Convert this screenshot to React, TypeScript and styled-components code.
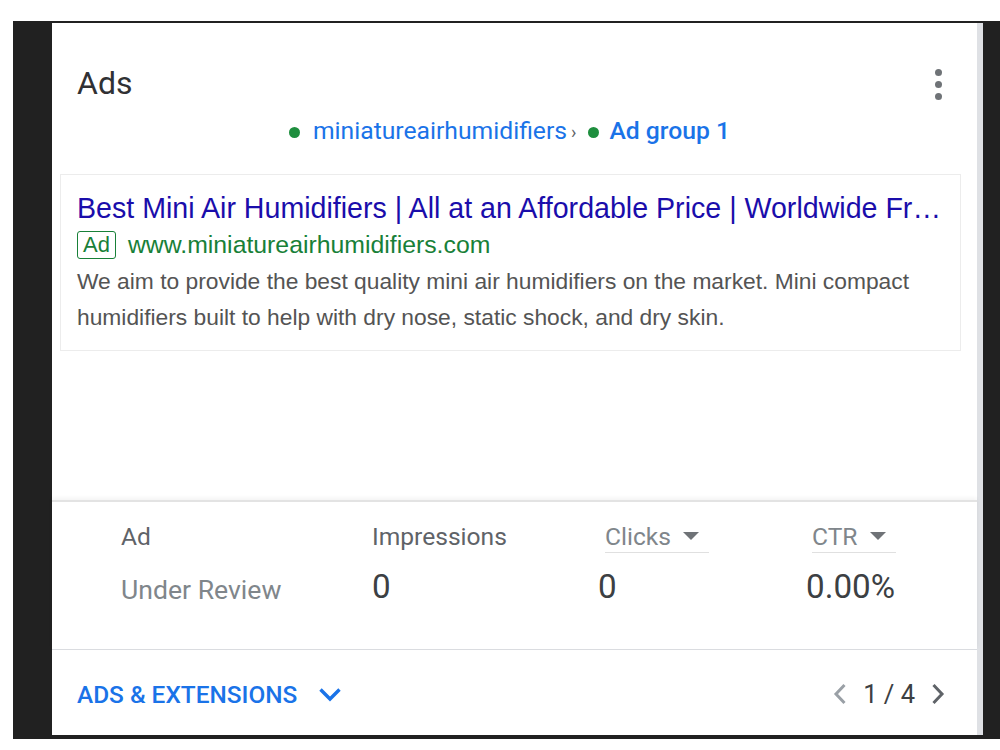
import React from 'react';
import styled, { createGlobalStyle } from 'styled-components';

const GlobalStyle = createGlobalStyle`
  html, body {
    margin: 0;
    padding: 0;
    background: #ffffff;
  }
  body {
    font-family: Roboto, 'Liberation Sans', Arial, sans-serif;
  }
`;

interface StatColumn {
  label: string;
  value: string;
  sortable?: boolean;
  offset?: number;
  tone?: 'muted' | 'normal';
}

const columns: StatColumn[] = [
  { label: 'Ad', value: 'Under Review', tone: 'muted' },
  { label: 'Impressions', value: '0' },
  { label: 'Clicks', value: '0', sortable: true, offset: 7 },
  { label: 'CTR', value: '0.00%', sortable: true, offset: 6 },
];

const App: React.FC = () => {
  return (
    <>
      <GlobalStyle />
      <Frame>
        <Card>
          <TopSection>
            <Header>
              <Title>Ads</Title>
              <MenuDots aria-label="More">
                <Dot />
                <Dot />
                <Dot />
              </MenuDots>
            </Header>

            <Breadcrumb>
              <StatusDot />
              <CrumbLink>miniatureairhumidifiers</CrumbLink>
              <CrumbSep>›</CrumbSep>
              <StatusDot $tight />
              <CrumbLink $strong>Ad group 1</CrumbLink>
            </Breadcrumb>

            <Preview>
              <AdTitle>
                Best Mini Air Humidifiers | All at an Affordable Price | Worldwide Fr…
              </AdTitle>
              <UrlRow>
                <AdBadge>Ad</AdBadge>
                <AdUrl>www.miniatureairhumidifiers.com</AdUrl>
              </UrlRow>
              <AdDescription>
                We aim to provide the best quality mini air humidifiers on the market. Mini compact
                humidifiers built to help with dry nose, static shock, and dry skin.
              </AdDescription>
            </Preview>
          </TopSection>

          <Stats>
            {columns.map((col) => (
              <LabelCell key={col.label}>
                <StatLabel $sortable={!!col.sortable} $offset={col.offset ?? 0}>
                  {col.label}
                  {col.sortable && <SortArrow />}
                </StatLabel>
              </LabelCell>
            ))}
            {columns.map((col) => (
              <StatValue key={col.label + '-v'} $muted={col.tone === 'muted'}>
                {col.value}
              </StatValue>
            ))}
          </Stats>

          <Footer>
            <ExpandButton>
              ADS &amp; EXTENSIONS
              <svg width="24" height="15" viewBox="0 0 24 15">
                <polyline
                  points="2.5,2.5 12,12 21.5,2.5"
                  fill="none"
                  stroke="#1a73e8"
                  strokeWidth="3.4"
                />
              </svg>
            </ExpandButton>
            <Pager>
              <svg width="14" height="22" viewBox="0 0 14 22">
                <polyline points="11.5,2 3,11 11.5,20" fill="none" stroke="#9aa0a6" strokeWidth="3" />
              </svg>
              <PageText>1 / 4</PageText>
              <svg width="14" height="22" viewBox="0 0 14 22">
                <polyline points="2.5,2 11,11 2.5,20" fill="none" stroke="#5f6368" strokeWidth="3" />
              </svg>
            </Pager>
          </Footer>
        </Card>
      </Frame>
    </>
  );
};

const Frame = styled.div`
  margin: 21px 0 0 13px;
  width: 987px;
  height: 718px;
  box-sizing: border-box;
  padding: 2px 17px 4px 39px;
  background: #212121;
  display: flex;
`;

const Card = styled.div`
  flex: 1;
  background: #ffffff;
  border-right: 6px solid #dfe1e5;
  display: flex;
  flex-direction: column;
  min-width: 0;
`;

const TopSection = styled.div`
  flex: 1;
  display: flex;
  flex-direction: column;
`;

const Header = styled.div`
  display: flex;
  align-items: center;
  justify-content: space-between;
  padding: 40px 35px 0 25px;
`;

const Title = styled.h1`
  margin: 0;
  font-family: Roboto, sans-serif;
  font-weight: 400;
  font-size: 32px;
  line-height: 40px;
  color: #303134;
`;

const MenuDots = styled.div`
  display: flex;
  flex-direction: column;
  gap: 5px;
  margin-top: 3px;
`;

const Dot = styled.span`
  width: 7px;
  height: 7px;
  border-radius: 50%;
  background: #6f7377;
`;

const Breadcrumb = styled.div`
  margin-top: 13px;
  padding-right: 10px;
  display: flex;
  justify-content: center;
  align-items: center;
  height: 30px;
  font-family: Roboto, sans-serif;
  font-size: 24.7px;
  color: #1a73e8;
`;

const StatusDot = styled.span<{ $tight?: boolean }>`
  width: 11px;
  height: 11px;
  border-radius: 50%;
  background: #1e8e3e;
  margin-right: ${({ $tight }) => ($tight ? 10 : 13)}px;
  margin-top: 2px;
`;

const CrumbLink = styled.span<{ $strong?: boolean }>`
  font-weight: ${({ $strong }) => ($strong ? 500 : 400)};
  line-height: 30px;
`;

const CrumbSep = styled.span`
  margin: 0 12px 0 4px;
  font-size: 18px;
  color: #5f6368;
`;

const Preview = styled.div`
  margin: 28px 16px 0 8px;
  border: 1px solid #ececec;
  padding: 15px 17px 15px 16px;
  font-family: 'Liberation Sans', Arial, sans-serif;
`;

const AdTitle = styled.div`
  font-size: 28.6px;
  line-height: 36px;
  color: #1a0dab;
  white-space: nowrap;
  overflow: hidden;
  text-overflow: ellipsis;
`;

const UrlRow = styled.div`
  display: flex;
  align-items: center;
  gap: 12px;
  height: 30px;
  margin-top: 4px;
`;

const AdBadge = styled.span`
  box-sizing: border-box;
  height: 28px;
  padding: 0 5px;
  border: 1px solid #188038;
  border-radius: 3px;
  font-size: 22px;
  line-height: 26px;
  color: #188038;
`;

const AdUrl = styled.span`
  font-size: 24.8px;
  line-height: 30px;
  color: #188038;
`;

const AdDescription = styled.p`
  margin: 3px 0 0;
  font-size: 22.8px;
  line-height: 36px;
  color: #545454;
`;

const Stats = styled.div`
  height: 149px;
  box-sizing: border-box;
  border-top: 2px solid #e3e3e3;
  box-shadow: 0 -2px 4px rgba(0, 0, 0, 0.05);
  padding: 18px 0 0 69px;
  display: grid;
  grid-template-columns: 251px 226px 208px auto;
  grid-template-rows: 33px 40px;
  row-gap: 14px;
  align-content: start;
  font-family: Roboto, sans-serif;
`;

const LabelCell = styled.div`
  display: flex;
  align-items: flex-start;
`;

const StatLabel = styled.div<{ $sortable: boolean; $offset: number }>`
  display: inline-flex;
  align-items: center;
  gap: 12px;
  height: 32px;
  margin-left: ${({ $offset }) => $offset}px;
  font-size: 24.6px;
  color: ${({ $sortable }) => ($sortable ? '#80868b' : '#5f6368')};
  border-bottom: 1px solid ${({ $sortable }) => ($sortable ? '#e0e0e0' : 'transparent')};
  padding-right: ${({ $sortable }) => ($sortable ? 10 : 0)}px;
`;

const SortArrow = styled.span`
  width: 0;
  height: 0;
  border-left: 8px solid transparent;
  border-right: 8px solid transparent;
  border-top: 8px solid #6f7377;
`;

const StatValue = styled.div<{ $muted: boolean }>`
  font-size: ${({ $muted }) => ($muted ? 26.6 : 33.2)}px;
  line-height: 40px;
  color: ${({ $muted }) => ($muted ? '#80868b' : '#3c4043')};
  padding-top: ${({ $muted }) => ($muted ? 3 : 0)}px;
`;

const Footer = styled.div`
  flex: 0 0 86px;
  box-sizing: border-box;
  border-top: 1px solid #dadce0;
  display: flex;
  align-items: center;
  justify-content: space-between;
  padding: 3px 32px 0 25px;
`;

const ExpandButton = styled.div`
  display: flex;
  align-items: center;
  gap: 21px;
  font-family: Roboto, sans-serif;
  font-weight: 500;
  font-size: 24.4px;
  color: #1a73e8;
`;

const Pager = styled.div`
  display: flex;
  align-items: center;
  gap: 16px;
`;

const PageText = styled.span`
  font-family: Roboto, sans-serif;
  font-size: 25.5px;
  color: #3c4043;
`;

export default App;
